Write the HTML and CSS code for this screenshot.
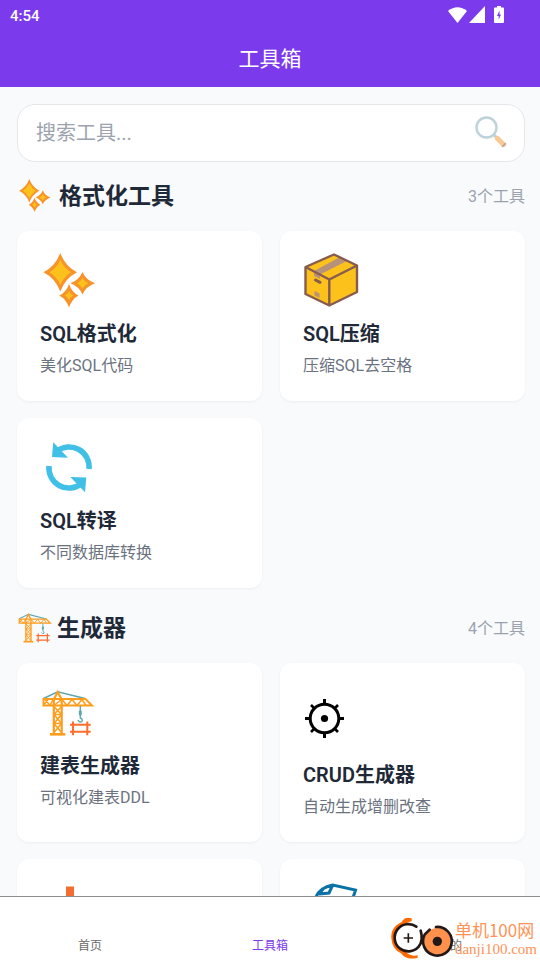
FILE: index.html
```
<!DOCTYPE html>
<html lang="zh-CN">
<head>
    <meta charset="UTF-8">
    <meta name="viewport" content="width=device-width, initial-scale=1.0">
    <title>工具箱</title>
    <link rel="stylesheet" href="styles.css">
</head>
<body>
    <!-- 公用图标 -->
    <svg class="symbols" aria-hidden="true">
        <symbol id="sparkles" viewBox="0 0 56 56">
            <g fill="#f79329">
                <path d="M20.3 0Q25 13 37 19.3Q25 25.500 20.3 38.500Q15.500 25.500 3.500 19.300Q15.500 13 20.3 0Z"/>
                <path d="M42.500 19Q46 27 55 30.300Q46 33.500 42.500 41.500Q39 33.500 30.500 30.300Q39 27 42.500 19Z"/>
                <path d="M29 31Q32 39.500 38.500 42.500Q32 46 29 54.500Q26 46 19.300 42.500Q26 39.500 29 31Z"/>
            </g>
            <g fill="#fcc21b">
                <path d="M20.300 7Q24 15 31 19.300Q24 24 20.300 31.500Q16.500 24 9.500 19.300Q16.500 15 20.300 7Z"/>
                <path d="M42.500 25Q44 28.500 48 30.300Q44 32 42.500 35.500Q41 32 37 30.300Q41 28.500 42.500 25Z"/>
                <path d="M29 38Q30 41 33 42.500Q30 44 29 47Q28 44 25 42.500Q28 41 29 38Z"/>
            </g>
        </symbol>
        <symbol id="crane" viewBox="0 2 56 53">
            <path d="M3.500 14L17.700 7.300L46 14.300" fill="none" stroke="#5fa6b0" stroke-width="1.600"/>
            <g fill="none" stroke="#ff9c1b">
                <path d="M3.500 14.500H45.500L52 21H3.500Z" stroke-width="2"/>
                <path d="M5 15L10 21L13 15M22 15L27 21L32 15L37 21L42 15L46 21M4 20L8 15" stroke-width="1.500"/>
                <path d="M13.800 50V15L17.700 7.500L21.700 15V50" stroke-width="2.200"/>
                <path d="M14 22L21.500 30L14 39L21.500 48M21.500 22L14 30L21.500 39L14 48M14 30H21.500M14 39H21.500M14 21L21.500 15" stroke-width="1.500"/>
                <path d="M10 49.800H25.300" stroke-width="2.600"/>
            </g>
            <path d="M40.300 21.500V33.500Q43 34.500 42 37Q39.500 38.500 38 35.500" fill="none" stroke="#5fa6b0" stroke-width="1.400"/>
            <rect x="38.800" y="26" width="3" height="5" rx="1" fill="#5fa6b0"/>
            <path d="M30 40.300H50.700M30 47.300H50.700M33 37V50.700M47.300 37V50.700" fill="none" stroke="#ff6e2e" stroke-width="2"/>
        </symbol>
    </svg>

    <div class="app">
        <header class="header">
            <div class="status-bar">
                <span class="time">4:54</span>
                <span class="status-icons">
                    <svg width="19" height="16" viewBox="0 0 19 16"><path d="M0 4Q9.500 -3.500 19 4L9.500 16Z" fill="#fff"/></svg>
                    <svg class="signal" width="16" height="17" viewBox="0 0 16 17"><path d="M16 0V17H0Z" fill="#fff"/></svg>
                    <svg width="10" height="17" viewBox="0 0 10 17"><path d="M3 0H7V1.500H9Q10 1.500 10 2.500V16Q10 17 9 17H1Q0 17 0 16V2.500Q0 1.500 1 1.500H3Z" fill="#fff"/><path d="M5.500 4.500L3 10H4.700V13.500L7 8.500H5.500Z" fill="#7c3aed"/></svg>
                </span>
            </div>
            <h1 class="page-title">工具箱</h1>
        </header>

        <main class="content">
            <form class="search">
                <input class="search-input" type="text" placeholder="搜索工具..." aria-label="搜索工具">
                <button class="search-btn" type="button" aria-label="搜索">
                    <svg width="32" height="32" viewBox="0 0 32 32">
                        <circle cx="11.500" cy="11.500" r="10" fill="none" stroke="#7da8b5" stroke-width="2.400"/>
                        <path d="M18.500 18.500L22 22" stroke="#7da8b5" stroke-width="3"/>
                        <path d="M22.500 22.500L28.500 28.500" stroke="#f79329" stroke-width="5" stroke-linecap="round"/>
                        <path d="M30.500 27.500L27.500 30.500" stroke="#6d4c41" stroke-width="1.500" stroke-linecap="round"/>
                    </svg>
                </button>
            </form>

            <section class="section">
                <div class="section-head">
                    <svg class="section-icon" width="34" height="34"><use href="#sparkles"/></svg>
                    <h2 class="section-title">格式化工具</h2>
                    <span class="section-count">3个工具</span>
                </div>
                <div class="grid">
                    <a class="card" href="#">
                        <svg class="card-icon" width="56" height="56"><use href="#sparkles"/></svg>
                        <h3 class="card-title">SQL格式化</h3>
                        <p class="card-desc">美化SQL代码</p>
                    </a>
                    <a class="card" href="#">
                        <svg class="card-icon" width="56" height="56" viewBox="0 0 56 56">
                            <path d="M31 1.500L54 12.500V39L26.300 52.500L2.500 41V14Z" fill="#fcc21b"/>
                            <path d="M37 4L44 8L17 21.500V26L11 23V18Z" fill="#b89278"/>
                            <path d="M11.500 38L16.500 40.500V45L11.500 42.500Z" fill="#b89278"/>
                            <path d="M31 1.500L54 12.500V39L26.300 52.500L2.500 41V14ZM2.500 14L26.300 26.500L54 12.500M26.300 26.500V52.500" fill="none" stroke="#875b4e" stroke-width="2.400" stroke-linejoin="round"/>
                            <path d="M12.500 27L17 29.300" stroke="#875b4e" stroke-width="3" stroke-linecap="round"/>
                        </svg>
                        <h3 class="card-title">SQL压缩</h3>
                        <p class="card-desc">压缩SQL去空格</p>
                    </a>
                    <a class="card" href="#">
                        <svg class="card-icon" width="56" height="56" viewBox="0 0 56 56">
                            <g fill="none" stroke="#40c0e7" stroke-width="5.500">
                                <path d="M49 29A20 20 0 0 0 17 11"/>
                                <path d="M9 26A20 20 0 0 0 41 44"/>
                            </g>
                            <path d="M13.300 2.300L12 17L28 17.700Z" fill="#40c0e7"/>
                            <path d="M45 52.300L46.300 37.500L30.300 37Z" fill="#40c0e7"/>
                        </svg>
                        <h3 class="card-title">SQL转译</h3>
                        <p class="card-desc">不同数据库转换</p>
                    </a>
                </div>
            </section>

            <section class="section">
                <div class="section-head">
                    <svg class="section-icon crane-icon" width="36" height="34"><use href="#crane"/></svg>
                    <h2 class="section-title">生成器</h2>
                    <span class="section-count">4个工具</span>
                </div>
                <div class="grid">
                    <a class="card" href="#">
                        <svg class="card-icon" width="56" height="56"><use href="#crane"/></svg>
                        <h3 class="card-title">建表生成器</h3>
                        <p class="card-desc">可视化建表DDL</p>
                    </a>
                    <a class="card" href="#">
                        <svg class="card-icon" width="43" height="65" viewBox="0 0 43 65">
                            <g fill="none" stroke="#000" stroke-width="3">
                                <circle cx="21.500" cy="33.500" r="14.300"/>
                                <path d="M21.500 14V20M21.500 47V53M2 33.500H8M35 33.500H41"/>
                                <path d="M8 20L12 24M35 20L31 24M8 47L12 43M35 47L31 43" stroke-width="2.600"/>
                            </g>
                            <circle cx="21.500" cy="33.500" r="3.600"/>
                        </svg>
                        <h3 class="card-title">CRUD生成器</h3>
                        <p class="card-desc">自动生成增删改查</p>
                    </a>
                    <a class="card" href="#" aria-label="下载">
                        <svg class="card-icon" width="56" height="56" viewBox="0 0 56 56">
                            <path d="M26 5.500H34V32H42L30 46L18 32H26Z" fill="#f26d2f"/>
                        </svg>
                    </a>
                    <a class="card" href="#" aria-label="文档">
                        <svg class="card-icon" width="56" height="56" viewBox="0 0 56 56">
                            <path d="M12 52V19Q15 7 29.700 4L52.500 9L49 20V52ZM29.700 4L26 12L16 13M20 8L16 13" fill="none" stroke="#0b72a8" stroke-width="3"/>
                        </svg>
                    </a>
                </div>
            </section>
        </main>

        <nav class="tab-bar">
            <a class="tab" href="#">首页</a>
            <a class="tab active" href="#">工具箱</a>
            <a class="tab" href="#">我的</a>
        </nav>
    </div>

    <!-- 右下角水印 -->
    <div class="watermark">
        <svg width="63" height="44" viewBox="33 50 189 132">
            <path d="M98 57Q78 50 68 68Q34 84 37 116Q39 150 66 162Q82 184 116 175L116 168Q96 172 80 158Q46 146 46 116Q46 86 78 74Q88 68 98 66Z" fill="#ff6a00"/>
            <circle cx="88" cy="116" r="41" fill="#fff"/>
            <circle cx="175" cy="126" r="40" fill="#ff914d"/>
            <path d="M112 82A41 41 0 1 0 119 142Q134 124 125 94" fill="none" stroke="#231815" stroke-width="8" stroke-linecap="round"/>
            <path d="M171 83A43 43 0 1 1 137 106L152 91" fill="none" stroke="#231815" stroke-width="8" stroke-linecap="round"/>
            <circle cx="175" cy="126" r="14" fill="#231815"/>
            <path d="M88 102V130M74 116H102" stroke="#231815" stroke-width="5"/>
        </svg>
        <div class="watermark-text">
            <span class="watermark-name">单机100网</span>
            <span class="watermark-url">danji100.com</span>
        </div>
    </div>
</body>
</html>
```
FILE: styles.css
```
* {
    box-sizing: border-box;
}
body {
    margin: 0;
    background: #f9fafb;
    color: #1f2937;
    font-family: Roboto, "Noto Sans CJK SC", sans-serif;
}
h1, h2, h3, p {
    margin: 0;
}
svg {
    display: block;
    flex-shrink: 0;
}
.symbols {
    position: absolute;
    width: 0;
    height: 0;
}
.app {
    display: flex;
    flex-direction: column;
    height: 100vh;
    background: #f8fafc;
}

/* 顶部 */
.header {
    background: #7c3aed;
    color: #fff;
}
.status-bar {
    display: flex;
    justify-content: space-between;
    align-items: center;
    height: 32px;
    padding: 0 36px 0 10px;
}
.time {
    font-size: 15px;
    font-weight: 500;
}
.status-icons {
    display: flex;
    align-items: center;
    gap: 2px;
    padding-bottom: 3px;
}
.signal {
    margin-right: 7px;
}
.page-title {
    font-size: 21px;
    font-weight: 400;
    line-height: 55px;
    text-align: center;
}

/* 内容 */
.content {
    flex: 1;
    min-height: 0;
    overflow: hidden;
    padding: 17px 15px 0 17px;
}
.search {
    display: flex;
    align-items: center;
    height: 58px;
    margin-bottom: 17px;
    padding: 0 17px 0 18px;
    background: #fff;
    border: 1px solid #e5e7eb;
    border-radius: 18px;
}
.search-input {
    flex: 1;
    min-width: 0;
    padding: 0;
    border: none;
    outline: none;
    background: none;
    font-family: inherit;
    font-size: 20px;
    line-height: 28px;
}
.search-input::placeholder {
    color: #9ca3af;
}
.search-btn {
    padding: 0 0 2px;
    border: none;
    background: none;
    opacity: 0.5;
}
.section {
    margin-bottom: 23px;
}
.section-head {
    display: flex;
    align-items: center;
    margin-bottom: 18px;
}
.section-icon {
    margin-right: 8px;
}
.crane-icon {
    margin-right: 4px;
}
.section-title {
    flex: 1;
    padding-top: 2px;
    font-size: 23px;
    font-weight: 700;
    line-height: 32px;
}
.section-count {
    padding-top: 2px;
    color: #9ca3af;
    font-size: 16px;
    line-height: 24px;
}
.grid {
    display: grid;
    grid-template-columns: 1fr 1fr;
    gap: 17px 18px;
}
.card {
    padding: 22px 23px 23px;
    background: #fff;
    border-radius: 12px;
    box-shadow: 0 1px 3px rgba(0, 0, 0, 0.05);
    color: inherit;
    text-decoration: none;
}
.card-icon {
    margin-bottom: 11px;
}
.card-title {
    margin-bottom: 6px;
    font-size: 20px;
    font-weight: 600;
    line-height: 28px;
}
.card-desc {
    color: #6b7280;
    font-size: 16px;
    line-height: 24px;
}

/* 底部导航 */
.tab-bar {
    display: flex;
    align-items: flex-end;
    height: 64px;
    padding-bottom: 6px;
    background: #fff;
    border-top: 1px solid #8f8f8f;
}
.tab {
    flex: 1;
    color: #6b6b6b;
    font-size: 12px;
    line-height: 16px;
    text-align: center;
    text-decoration: none;
}
.tab.active {
    color: #7c3aed;
}

.watermark {
    position: absolute;
    right: 3px;
    bottom: 0;
    display: flex;
    align-items: center;
    gap: 2px;
    color: #ff9357;
}
.watermark-text {
    display: flex;
    flex-direction: column;
    padding-top: 2px;
}
.watermark-name {
    font-family: "Noto Sans CJK SC", sans-serif;
    font-size: 17px;
    line-height: 20px;
}
.watermark-url {
    font-family: "Liberation Serif", serif;
    font-size: 15px;
    line-height: 18px;
}
```
